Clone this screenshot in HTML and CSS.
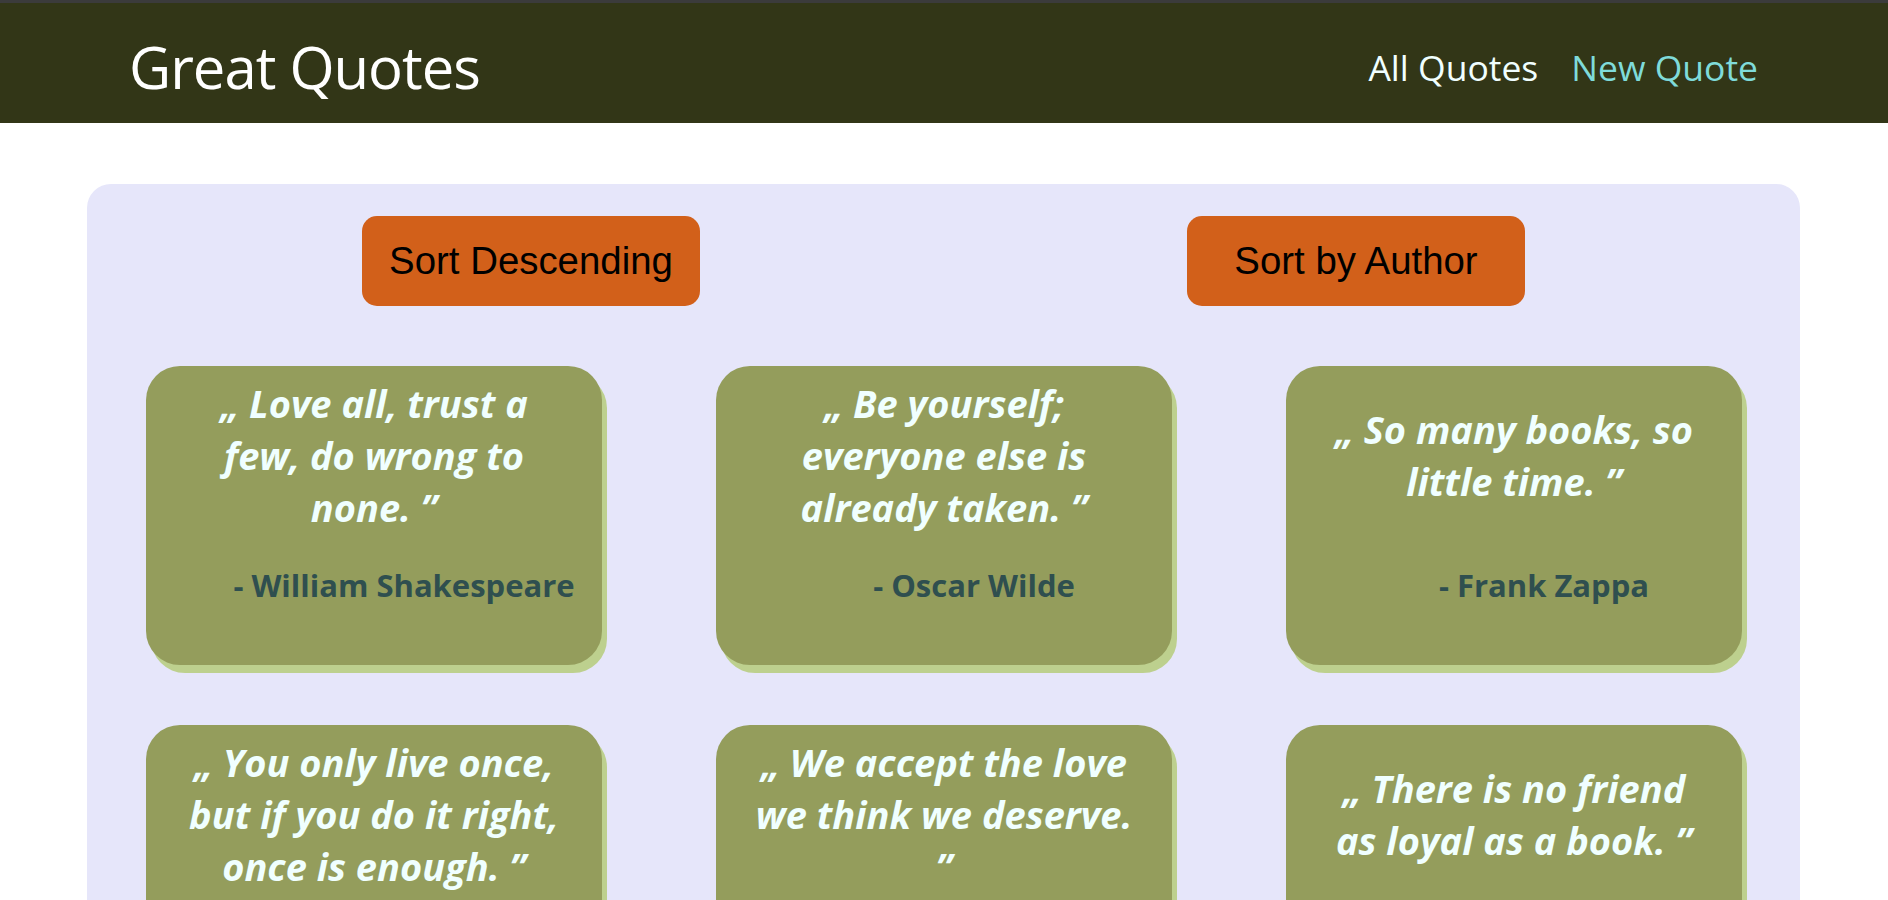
FILE: index.html
```html
<!DOCTYPE html>
<html lang="en">
<head>
<meta charset="utf-8">
<title>Great Quotes</title>
<link rel="stylesheet" href="styles.css">
</head>
<body>
<header class="topbar">
  <div class="logo">Great Quotes</div>
  <nav class="nav">
    <a class="nav-link" href="#">All Quotes</a>
    <a class="nav-link active" href="#">New Quote</a>
  </nav>
</header>
<main class="panel">
  <div class="actions">
    <button class="btn">Sort Descending</button>
    <button class="btn">Sort by Author</button>
  </div>
  <ul class="quotes">
    <li class="card">
      <blockquote class="quote">„ Love all, trust a few, do wrong to none. ”</blockquote>
      <p class="author">- William Shakespeare</p>
    </li>
    <li class="card">
      <blockquote class="quote">„ Be yourself; everyone else is already taken. ”</blockquote>
      <p class="author">- Oscar Wilde</p>
    </li>
    <li class="card">
      <blockquote class="quote">„ So many books, so little time. ”</blockquote>
      <p class="author">- Frank Zappa</p>
    </li>
    <li class="card">
      <blockquote class="quote">„ You only live once, but if you do it right, once is enough. ”</blockquote>
      <p class="author">- Mae West</p>
    </li>
    <li class="card">
      <blockquote class="quote">„ We accept the love we think we deserve. ”</blockquote>
      <p class="author">- Stephen Chbosky</p>
    </li>
    <li class="card">
      <blockquote class="quote">„ There is no friend as loyal as a book. ”</blockquote>
      <p class="author">- Ernest Hemingway</p>
    </li>
  </ul>
</main>
</body>
</html>
```
FILE: styles.css
```css
* {
  box-sizing: border-box;
}

html, body {
  margin: 0;
  padding: 0;
  background: #ffffff;
}

body {
  font-family: "Open Sans", "Noto Sans", sans-serif;
  overflow: hidden;
}

.topbar {
  box-sizing: content-box;
  height: 96px;
  padding: 24px 130px 0 129px;
  border-top: 3px solid #3b3b3b;
  background: #323617;
  display: flex;
  justify-content: space-between;
  align-items: flex-start;
}

.logo {
  font-size: 58px;
  letter-spacing: -1px;
  color: #ffffff;
  line-height: normal;
}

.nav {
  display: flex;
  gap: 33px;
  margin-top: 16px;
}

.nav-link {
  font-size: 35.5px;
  line-height: normal;
  color: #f0ffff;
  text-decoration: none;
}

.nav-link.active {
  color: #7fdbda;
}

.panel {
  margin: 61px 88px 0 87px;
  padding: 32px 59px 60px;
  background: #e6e6fa;
  border-radius: 24px;
}

.actions {
  display: flex;
  justify-content: center;
  gap: 487px;
}

.btn {
  width: 338px;
  height: 90px;
  border: none;
  border-radius: 15px;
  background: #d2601a;
  color: #000000;
  font-family: "Liberation Sans", Arial, sans-serif;
  font-size: 38.4px;
  padding: 0;
}

.quotes {
  list-style: none;
  margin: 60px 0 0;
  padding: 0;
  display: grid;
  grid-template-columns: repeat(3, 456px);
  column-gap: 114px;
  row-gap: 60px;
}

.card {
  height: 299px;
  padding-top: 11px;
  background: #949d5c;
  border-radius: 34px;
  box-shadow: 5px 8px 0 #bdd08e;
}

.quote {
  margin: 0 35px;
  height: 156px;
  display: flex;
  align-items: center;
  justify-content: center;
  text-align: center;
  font-style: italic;
  font-weight: 700;
  font-size: 38px;
  line-height: 52px;
  color: #f0ffff;
}

.author {
  margin: 31px 0 0;
  padding-left: 60px;
  text-align: center;
  font-weight: 700;
  font-size: 31px;
  line-height: normal;
  color: #2f4f4f;
}
```
